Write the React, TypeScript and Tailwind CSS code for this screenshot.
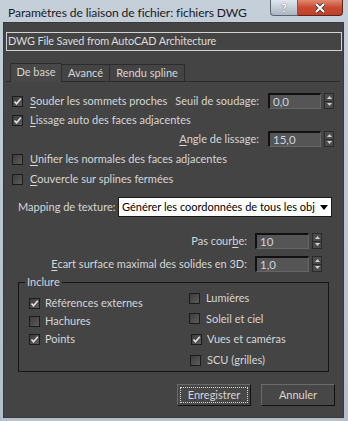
import React from "react";

const font = { fontFamily: '"Lato", "Liberation Sans", sans-serif' };

function Check({ checked }: { checked: boolean }) {
  return (
    <div className="w-[11px] h-[11px] shrink-0 border border-[#1c1c1c] bg-gradient-to-br from-[#3c3c3c] to-[#5c5c5c] flex items-center justify-center">
      {checked && (
        <svg width="9" height="9" viewBox="0 0 9 9">
          <path d="M1.5 4.5 L3.5 6.8 L7.8 1.8" stroke="#e4e4e4" strokeWidth="1.6" fill="none" />
        </svg>
      )}
    </div>
  );
}

function U({ children }: { children: React.ReactNode }) {
  return <span className="underline underline-offset-[2px] decoration-[1px]">{children}</span>;
}

function Spin({ value, w }: { value: string; w: string }) {
  return (
    <div className="flex items-center gap-[3px]">
      <div className={`${w} h-[16px] bg-[#555555] border-t-2 border-l-2 border-b border-r border-t-[#111] border-l-[#111] border-b-[#666] border-r-[#666] flex items-center pl-[3px] text-[11.5px] text-[#c9d4e4]`}>
        {value}
      </div>
      <div className="w-[10px] h-[16px] flex flex-col border border-[#2a2a2a] bg-[#4c4c4c]">
        <div className="flex-1 flex items-center justify-center border-b border-[#2a2a2a]">
          <svg width="5" height="3" viewBox="0 0 5 3"><path d="M0 3 L2.5 0 L5 3 Z" fill="#d0d0d0" /></svg>
        </div>
        <div className="flex-1 flex items-center justify-center">
          <svg width="5" height="3" viewBox="0 0 5 3"><path d="M0 0 L2.5 3 L5 0 Z" fill="#d0d0d0" /></svg>
        </div>
      </div>
    </div>
  );
}

function CheckRow({ checked, children, h = "h-[16px]", gap = "gap-[7px]" }: { checked: boolean; children: React.ReactNode; h?: string; gap?: string }) {
  return (
    <div className={`flex items-center ${gap} ${h}`}>
      <Check checked={checked} />
      <span className="whitespace-nowrap">{children}</span>
    </div>
  );
}

export default function App() {
  return (
    <div
      className="w-[348px] h-[421px] bg-gradient-to-b from-[#c4cfda] to-[#b3bfcb] flex flex-col overflow-hidden"
      style={font}
    >
      {/* Title bar */}
      <div className="h-[22px] flex items-start shrink-0">
        <div className="pl-[8px] pt-[4px] text-[12.1px] tracking-[-0.1px] text-[#1a1a1a] whitespace-nowrap flex-1 min-w-0 overflow-hidden">
          Paramètres de liaison de fichier: fichiers DWG
        </div>
        <div className="flex mr-[5px] shrink-0">
          <div className="w-[28px] h-[16px] border border-[#5a6470] border-t-0 rounded-bl-[4px] bg-gradient-to-b from-[#dfe6ee] to-[#aab6c2] flex items-center justify-center text-[12px] font-bold text-white [text-shadow:0_0_1px_#333]">
            ?
          </div>
          <div className="w-[45px] h-[16px] border border-[#5a2418] border-t-0 border-l-0 rounded-br-[4px] bg-gradient-to-b from-[#e08870] via-[#c84a30] to-[#c0402a] flex items-center justify-center">
            <svg width="12" height="10" viewBox="0 0 12 10">
              <path d="M2 1 L10 9 M10 1 L2 9" stroke="#3a3a3a" strokeWidth="3.6" />
              <path d="M2 1 L10 9 M10 1 L2 9" stroke="#ffffff" strokeWidth="2" />
            </svg>
          </div>
        </div>
      </div>

      {/* Content */}
      <div className="ml-[3px] w-[341px] h-[396px] border border-[#3a3a3a] bg-[#444444] text-[11px] text-[#d6d6d6] flex flex-col">
        {/* text field */}
        <div className="mt-[9px] ml-[2px] w-[336px] h-[19px] border border-[#d2d2d2] flex items-center pl-[1px] text-[10.9px] tracking-[-0.15px] text-[#dcdcdc] whitespace-nowrap">
          DWG File Saved from AutoCAD Architecture
        </div>

        {/* tabs */}
        <div className="mt-[12px] ml-[2px] w-[334px] h-[19px] flex items-end border-b border-[#2c2c2c]">
          <div className="ml-[4px] w-[52px] h-[19px] border border-b-0 border-[#2c2c2c] bg-[#484848] flex items-center justify-center -mb-px pb-[1px] rounded-t-[1px]">
            De base
          </div>
          <div className="w-[48px] h-[17px] border border-l-0 border-b-0 border-[#2c2c2c] flex items-center justify-center">
            Avancé
          </div>
          <div className="w-[75px] h-[17px] border border-l-0 border-b-0 border-[#2c2c2c] flex items-center justify-center">
            Rendu spline
          </div>
        </div>

        {/* row 1 */}
        <div className="mt-[11px] h-[16px] flex items-center pr-[9px]">
          <div className="ml-[8px] flex-1">
            <CheckRow checked>
              <U>S</U>ouder les sommets proches
            </CheckRow>
          </div>
          <span className="whitespace-nowrap">Seuil de soudage:</span>
          <div className="ml-[9px]">
            <Spin value="0,0" w="w-[53px]" />
          </div>
        </div>

        {/* row 2 */}
        <div className="mt-[3px] ml-[8px]">
          <CheckRow checked>
            <U>L</U>issage auto des faces adjacentes
          </CheckRow>
        </div>

        {/* row 3 */}
        <div className="mt-[3px] h-[16px] flex items-center justify-end pr-[9px]">
          <span className="whitespace-nowrap">
            <U>A</U>ngle de lissage:
          </span>
          <div className="ml-[9px]">
            <Spin value="15,0" w="w-[53px]" />
          </div>
        </div>

        {/* row 4 */}
        <div className="mt-[4px] ml-[8px]">
          <CheckRow checked={false}>
            <U>U</U>nifier les normales des faces adjacentes
          </CheckRow>
        </div>

        {/* row 5 */}
        <div className="mt-[4px] ml-[8px]">
          <CheckRow checked={false}>
            <U>C</U>ouvercle sur splines fermées
          </CheckRow>
        </div>

        {/* row 6 */}
        <div className="mt-[10px] h-[20px] flex items-center pr-[11px]">
          <span className="ml-[14px] flex-1 whitespace-nowrap">Mapping de texture:</span>
          <div className="w-[214px] h-[20px] bg-white border border-[#1a1a1a] flex items-center text-black pl-[3px] overflow-hidden">
            <span className="flex-1 min-w-0 whitespace-nowrap overflow-hidden">Générer les coordonnées de tous les obj</span>
            <span className="w-[14px] flex items-center justify-center shrink-0">
              <svg width="8" height="5" viewBox="0 0 8 5"><path d="M0 0 L8 0 L4 5 Z" fill="#000" /></svg>
            </span>
          </div>
        </div>

        {/* row 7 */}
        <div className="mt-[16px] h-[16px] flex items-center justify-end pr-[21px]">
          <span className="whitespace-nowrap">
            Pas cour<U>b</U>e:
          </span>
          <div className="ml-[8px]">
            <Spin value="10" w="w-[54px]" />
          </div>
        </div>

        {/* row 8 */}
        <div className="mt-[7px] h-[16px] flex items-center justify-end pr-[21px]">
          <span className="whitespace-nowrap">
            <U>E</U>cart surface maximal des solides en 3D:
          </span>
          <div className="ml-[8px]">
            <Spin value="1,0" w="w-[54px]" />
          </div>
        </div>

        {/* group */}
        <div className="mt-[10px] ml-[14px] w-[311px] h-[90px] border border-[#161616] relative flex">
          <span className="absolute left-[6px] -top-[8px] px-[2px] bg-[#444444] leading-[14px]">Inclure</span>
          <div className="ml-[10px] w-[160px] pt-[11px] flex flex-col">
            <CheckRow checked h="h-[18px]" gap="gap-[5px]">Références externes</CheckRow>
            <CheckRow checked={false} h="h-[18px]" gap="gap-[5px]">Hachures</CheckRow>
            <CheckRow checked h="h-[18px]" gap="gap-[5px]">Points</CheckRow>
          </div>
          <div className="pt-[5px] flex flex-col">
            <CheckRow checked={false} h="h-[21px]" gap="gap-[6px]">Lumières</CheckRow>
            <CheckRow checked={false} h="h-[21px]" gap="gap-[6px]">Soleil et ciel</CheckRow>
            <div className="ml-[2px]">
              <CheckRow checked h="h-[21px]" gap="gap-[5px]">Vues et caméras</CheckRow>
            </div>
            <div className="ml-[1px]">
              <CheckRow checked={false} h="h-[21px]" gap="gap-[6px]">SCU (grilles)</CheckRow>
            </div>
          </div>
        </div>

        {/* buttons */}
        <div className="mt-[12px] flex pl-[173px] gap-[10px]">
          <div className="w-[74px] h-[22px] border border-t-[#6a6a6a] border-l-[#6a6a6a] border-b-[#111] border-r-[#111] bg-[#474747] p-[2px]">
            <div className="w-full h-full border border-dotted border-[#d8d8d8] flex items-center justify-center">
              Enregistrer
            </div>
          </div>
          <div className="w-[74px] h-[22px] border border-t-[#6a6a6a] border-l-[#6a6a6a] border-b-[#111] border-r-[#111] bg-[#474747] flex items-center justify-center">
            Annuler
          </div>
        </div>
      </div>
    </div>
  );
}
